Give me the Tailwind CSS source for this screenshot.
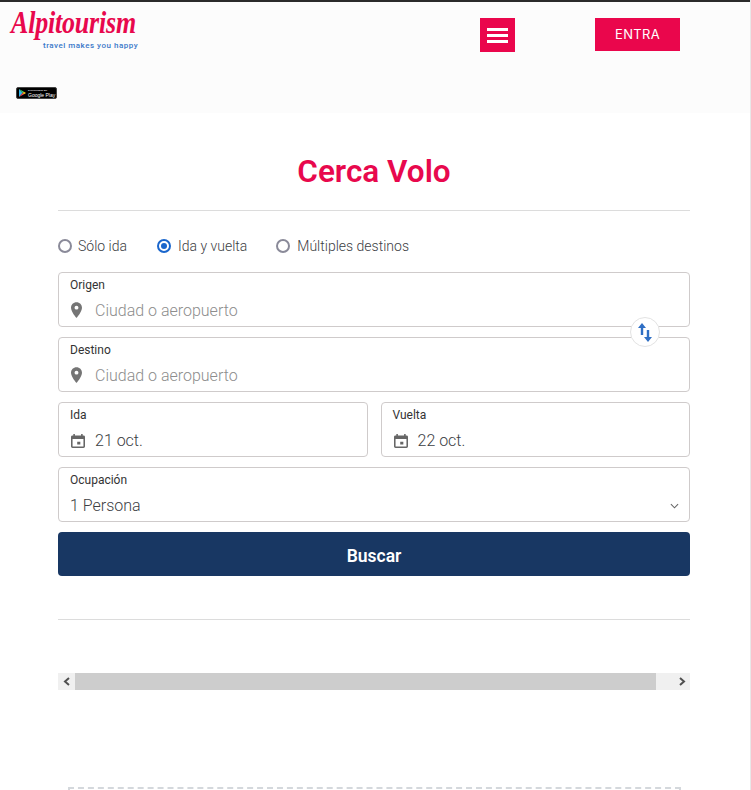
<!DOCTYPE html>
<html lang="es">
<head>
<meta charset="UTF-8">
<meta name="viewport" content="width=device-width, initial-scale=1.0">
<title>Cerca Volo</title>
<script src="https://cdn.jsdelivr.net/npm/@tailwindcss/browser@4"></script>
</head>
<body class="bg-white font-['Roboto',sans-serif] h-[790px] overflow-hidden border-r border-[#e8e8e8]">
  <!-- Header -->
  <header class="h-[113px] bg-[#fcfcfc] border-t-2 border-[#2b2b2b] -mr-px">
    <div class="flex h-[84px] items-start">
      <a class="block w-[480px] pl-[11px] pt-[10px] shrink-0">
        <div class="font-['Liberation_Serif',serif] italic font-bold text-[26px] leading-[28px] tracking-[-0.2px] text-[#e8084d] scale-y-125 origin-bottom">Alpitourism</div>
        <div class="font-['Roboto',sans-serif] font-medium text-[8px] leading-[9px] tracking-[0.5px] text-[#3a78c9] pl-[32px] mt-px">travel makes you happy</div>
      </a>
      <button class="mt-4 w-[35px] h-[34px] bg-[#ea064c] flex flex-col items-center justify-center gap-[3px]">
        <span class="block w-[21px] h-[3px] bg-white"></span>
        <span class="block w-[21px] h-[3px] bg-white"></span>
        <span class="block w-[21px] h-[3px] bg-white"></span>
      </button>
      <button class="ml-20 mt-4 pt-px w-[85px] h-[33px] bg-[#ea064c] text-white text-[13px] tracking-[0.3px] font-['Inter',sans-serif]">ENTRA</button>
    </div>
    <a class="ml-4 mt-px w-[41px] h-[12px] bg-black rounded-[2px] border border-[#444] flex items-center gap-[2px] pl-[2px] overflow-hidden">
      <svg width="7" height="8" viewBox="0 0 7 8" class="shrink-0">
        <path d="M0 0L3.500 4L0 8Z" fill="#2fb7ee"/>
        <path d="M0 0L5 2.800L3.500 4Z" fill="#37c46f"/>
        <path d="M0 8L5 5.200L3.500 4Z" fill="#ee4554"/>
        <path d="M5 2.800L7 4L5 5.200L3.500 4Z" fill="#fcc419"/>
      </svg>
      <span class="flex flex-col text-white font-['Liberation_Sans',sans-serif] whitespace-nowrap">
        <span class="text-[2.500px] leading-[3px]">DISPONIBLE EN</span>
        <span class="text-[5px] leading-[6px]">Google Play</span>
      </span>
    </a>
  </header>

  <!-- Search form -->
  <main class="h-[677px] overflow-hidden pl-[58px] pr-[60px]">
    <h1 class="pt-[41px] h-[98px] border-b border-[#dcdcdc] text-center text-[31.500px] leading-[36px] font-semibold text-[#e8084d]">Cerca Volo</h1>

    <div class="flex items-center h-[20px] mt-[25px] text-[14px] font-light text-[#3c4043]">
      <label class="flex items-center gap-[6px] mr-[30px]">
        <span class="w-[14px] h-[14px] rounded-full border-2 border-[#8a8a99] bg-white"></span>Sólo ida
      </label>
      <label class="flex items-center gap-[7px] mr-[29px]">
        <span class="w-[14px] h-[14px] rounded-full border-2 border-[#1a66cc] bg-white flex items-center justify-center"><span class="block w-[6px] h-[6px] rounded-full bg-[#1a66cc]"></span></span>Ida y vuelta
      </label>
      <label class="flex items-center gap-[7px]">
        <span class="w-[14px] h-[14px] rounded-full border-2 border-[#8a8a99] bg-white"></span>Múltiples destinos
      </label>
    </div>

    <div class="mt-4 flex flex-col gap-[10px] relative">
      <div class="h-[55px] border border-[#cfcbcb] rounded-[4px] px-[11px] pt-[5px]">
        <div class="text-[12px] leading-[14px] text-[#333]">Origen</div>
        <div class="flex items-center mt-[9px] h-[20px]">
          <svg viewBox="5 2 14 20" class="shrink-0 w-[11px] h-[16px] ml-px -mt-[2px]" fill="#757575"><path d="M12 2C8 2 5 5.100 5 9c0 5.200 7 13 7 13s7-7.800 7-13c0-3.900-3-7-7-7zm0 9.500a2.500 2.500 0 1 1 0-5 2.500 2.500 0 0 1 0 5z"/></svg>
          <span class="ml-[13px] text-[16px] font-light text-[#8d8d8d]">Ciudad o aeropuerto</span>
        </div>
      </div>

      <button class="absolute right-[30px] top-[45px] w-[30px] h-[30px] rounded-full bg-white border border-[#e3e3e3] flex items-center justify-center z-10">
        <svg width="14" height="19" viewBox="0 0 14 19" fill="#2f6fc4">
          <path d="M0 5L4 0l4 5H5.200v7H2.800V5z"/>
          <path d="M6 14l4 5 4-5h-2.800V7H8.800v7z"/>
        </svg>
      </button>

      <div class="h-[55px] border border-[#cfcbcb] rounded-[4px] px-[11px] pt-[5px]">
        <div class="text-[12px] leading-[14px] text-[#333]">Destino</div>
        <div class="flex items-center mt-[9px] h-[20px]">
          <svg viewBox="5 2 14 20" class="shrink-0 w-[11px] h-[16px] ml-px -mt-[2px]" fill="#757575"><path d="M12 2C8 2 5 5.100 5 9c0 5.200 7 13 7 13s7-7.800 7-13c0-3.900-3-7-7-7zm0 9.500a2.500 2.500 0 1 1 0-5 2.500 2.500 0 0 1 0 5z"/></svg>
          <span class="ml-[13px] text-[16px] font-light text-[#8d8d8d]">Ciudad o aeropuerto</span>
        </div>
      </div>

      <div class="flex gap-[13px]">
        <div class="flex-1 h-[55px] border border-[#cfcbcb] rounded-[4px] px-[11px] pt-[5px]">
          <div class="text-[12px] leading-[14px] text-[#333]">Ida</div>
          <div class="flex items-center mt-[9px] h-[20px]">
            <svg viewBox="3 2 18 20" preserveAspectRatio="none" class="shrink-0 w-[14px] h-[14px] ml-px" fill="#666"><path d="M19 4h-1V2h-2v2H8V2H6v2H5a2 2 0 0 0-2 2v14a2 2 0 0 0 2 2h14a2 2 0 0 0 2-2V6a2 2 0 0 0-2-2zm0 16H5V9h14v11zM11 13h4v4h-4z"/></svg>
            <span class="ml-[10px] text-[16px] font-light text-[#3c4043]">21 oct.</span>
          </div>
        </div>
        <div class="flex-1 h-[55px] border border-[#cfcbcb] rounded-[4px] px-[11px] pt-[5px]">
          <div class="text-[12px] leading-[14px] text-[#333]">Vuelta</div>
          <div class="flex items-center mt-[9px] h-[20px]">
            <svg viewBox="3 2 18 20" preserveAspectRatio="none" class="shrink-0 w-[14px] h-[14px] ml-px" fill="#666"><path d="M19 4h-1V2h-2v2H8V2H6v2H5a2 2 0 0 0-2 2v14a2 2 0 0 0 2 2h14a2 2 0 0 0 2-2V6a2 2 0 0 0-2-2zm0 16H5V9h14v11zM11 13h4v4h-4z"/></svg>
            <span class="ml-[10px] text-[16px] font-light text-[#3c4043]">22 oct.</span>
          </div>
        </div>
      </div>

      <div class="h-[55px] border border-[#cfcbcb] rounded-[4px] px-[11px] pt-[5px]">
        <div class="text-[12px] leading-[14px] text-[#333]">Ocupación</div>
        <div class="flex items-center justify-between mt-[9px] h-[20px]">
          <span class="text-[16px] font-light text-[#3c4043]">1 Persona</span>
          <svg width="9" height="6" viewBox="0 0 10 6" fill="none" stroke="#666" stroke-width="1.200" class="-mr-px"><path d="M1 1l4 4 4-4"/></svg>
        </div>
      </div>

      <button class="h-[44px] pt-1 rounded-[4px] bg-[#183763] text-white text-[17.500px] font-semibold">Buscar</button>
    </div>

    <div class="mt-[43px] border-t border-[#dcdcdc]"></div>

    <!-- Scrollbar -->
    <div class="mt-[53px] h-[17px] flex bg-[#f0f0f0]">
      <div class="w-[17px] flex items-center justify-center">
        <svg width="7" height="9" viewBox="0 0 7 9" fill="none" stroke="#505050" stroke-width="2"><path d="M6 1L2 4.500 6 8"/></svg>
      </div>
      <div class="w-[581px] bg-[#cdcdcd]"></div>
      <div class="flex-1 flex items-center justify-end pr-[4px]">
        <svg width="7" height="9" viewBox="0 0 7 9" fill="none" stroke="#505050" stroke-width="2"><path d="M1 1l4 3.500L1 8"/></svg>
      </div>
    </div>

    <div class="mt-[97px] ml-[10px] mr-[9px] h-[20px] border-2 border-dashed border-[#d4d8dc]"></div>
  </main>
</body>
</html>
